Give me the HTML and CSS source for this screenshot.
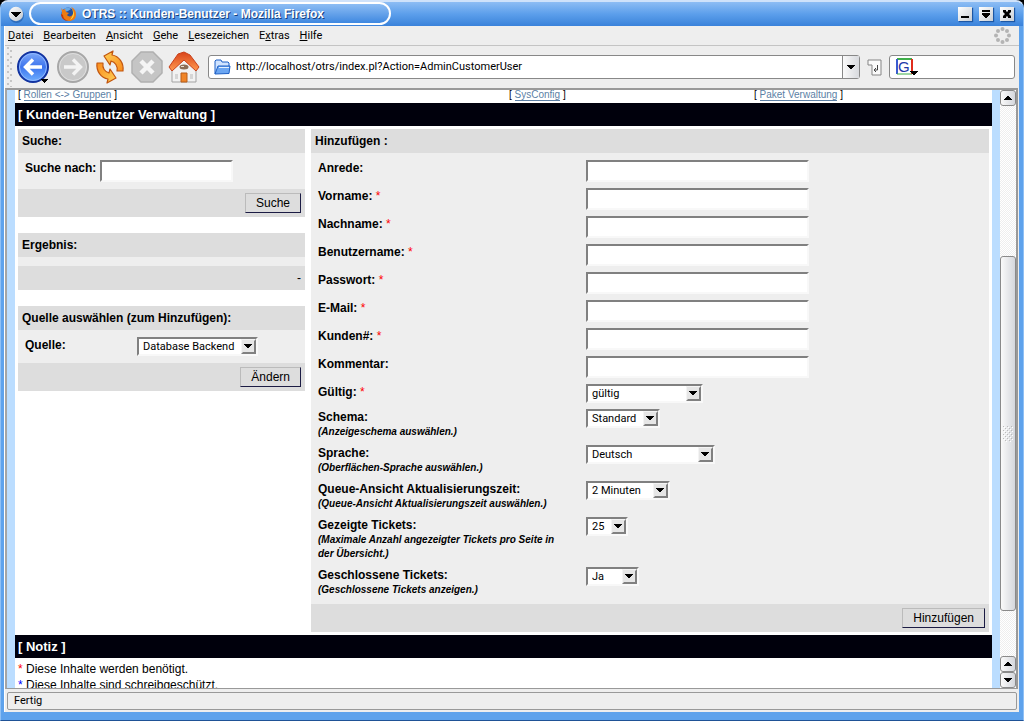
FILE: index.html
```html
<!DOCTYPE html>
<html lang="de">
<head>
<meta charset="utf-8">
<title>OTRS :: Kunden-Benutzer</title>
<link rel="stylesheet" href="styles.css">
</head>
<body>
<div class="window">
  <header class="titlebar">
    <button class="wm-menu" aria-label="Fenstermenü"><svg width="22" height="22" viewBox="0 0 22 22"><defs><linearGradient id="knob" x1="0" y1="0" x2="1" y2="1"><stop offset="0" stop-color="#fff"/><stop offset="1" stop-color="#bfc5cc"/></linearGradient></defs><circle cx="11.500" cy="12.500" r="7.500" fill="#1d57a4" opacity=".6"/><circle cx="11" cy="11" r="7.200" fill="url(#knob)"/><path d="M6 9h10v1h-1v1h-1v1h-1v1h-1v1h-2v-1H9v-1H8v-1H7v-1H6z"/></svg></button>
    <div class="title-tab">
      <svg width="16" height="16" viewBox="0 0 16 16"><circle cx="8" cy="8" r="6.500" fill="#254f9c"/><path d="M4 3c2-2 5-2 7 0L8 5 5 6z" fill="#65a8e8"/><path d="M1 2l2 2 2-1 1 3 3 1-2 2c1 2 5 2 6-1 1-2 0-5-2-7 3 1 5 4 5 7 0 5-3 7-7 7-5 0-7-4-7-7 0-2 0-4-1-6z" fill="#ee7b12"/><path d="M12 3c3 3 3 9-2 11 3-4 4-7 2-11z" fill="#ffd43b"/><path d="M1 8c0 4 3 7 7 7-3-1-5-3-5-6z" fill="#c63a0b"/></svg>
      <h1>OTRS :: Kunden-Benutzer - Mozilla Firefox</h1>
    </div>
    <div class="wm-buttons">
      <button aria-label="Minimieren"><svg width="14" height="14"><path d="M3 9h8v2H3z"/></svg></button>
      <button aria-label="Maximieren"><svg width="14" height="14"><path d="M3 3h8v2H3zM3 6h8v2h-1v1H9v1H8v1H6v-1H5V9H4V8H3z"/></svg></button>
      <button aria-label="Schließen"><svg width="14" height="14"><path d="M3 3h3v1l1 1 1-1V3h3v2L9 7l2 2v2H8v-1L7 9l-1 1v1H3V9l2-2-2-2z"/></svg></button>
    </div>
  </header>
  <div class="chrome">
    <nav class="menubar">
      <button><u>D</u>atei</button><button><u>B</u>earbeiten</button><button><u>A</u>nsicht</button><button><u>G</u>ehe</button><button><u>L</u>esezeichen</button><button>E<u>x</u>tras</button><button><u>H</u>ilfe</button>
      <svg class="throbber" width="17" height="17" viewBox="0 0 17 17" fill="#b4b4b4"><circle cx="8.500" cy="2" r="2"/><circle cx="13" cy="4" r="2"/><circle cx="15" cy="8.500" r="2"/><circle cx="13" cy="13" r="2"/><circle cx="8.500" cy="15" r="2"/><circle cx="4" cy="13" r="2"/><circle cx="2" cy="8.500" r="2"/><circle cx="4" cy="4" r="2"/></svg>
    </nav>
    <div class="toolbar">
      <svg class="grip" width="6" height="40"><defs><pattern id="dots" width="6" height="6" patternUnits="userSpaceOnUse"><path d="M0 0h2v2H0zM3 3h2v2H3z" fill="#c6c6c6"/></pattern></defs><rect width="6" height="40" fill="url(#dots)"/></svg>
      <button class="tool back" aria-label="Zurück"><svg width="34" height="34" viewBox="0 0 34 34"><defs><linearGradient id="back" x1="0" y1="0" x2="0" y2="1"><stop offset="0" stop-color="#7fa9f8"/><stop offset=".5" stop-color="#3d74ee"/><stop offset="1" stop-color="#6fb1ff"/></linearGradient></defs><circle cx="17" cy="17" r="15" fill="url(#back)" stroke="#1233a0" stroke-width="2"/><circle cx="17" cy="17" r="13.500" fill="none" stroke="#8fb8ff"/><path d="M26 17H10M17 9.500L9.500 17l7.500 7.500" fill="none" stroke="#fff" stroke-width="3.400"/><path d="M25 29h7v1h-1v1h-1v1h-1v1h-1v-1h-1v-1h-1v-1h-1z"/></svg></button>
      <button class="tool" aria-label="Vor"><svg width="34" height="34" viewBox="0 0 34 34"><circle cx="17" cy="17" r="15" fill="#c9c9c9" stroke="#a7a7a7" stroke-width="2"/><circle cx="17" cy="17" r="13.500" fill="none" stroke="#dedede"/><path d="M8 17h16M17 9.500l7.500 7.500-7.500 7.500" fill="none" stroke="#f3f3f3" stroke-width="3.400"/></svg></button>
      <button class="tool" aria-label="Neu laden"><svg width="34" height="34" viewBox="0 0 34 34"><defs><linearGradient id="amber" x1="0" y1="0" x2="1" y2="1"><stop offset="0" stop-color="#ffd257"/><stop offset="1" stop-color="#f98a1c"/></linearGradient></defs><g fill="url(#amber)" stroke="#c2560f" stroke-width="1.200" stroke-linejoin="round"><path d="M11 6l9-5-1 4c7 1 12 8 11 16h-6c1-5-2-9-6-10l-1 4z"/><path d="M11 6l9-5-1 4c7 1 12 8 11 16h-6c1-5-2-9-6-10l-1 4z" transform="rotate(180 17 17)"/></g></svg></button>
      <button class="tool" aria-label="Stopp"><svg width="34" height="34" viewBox="0 0 34 34"><path d="M11 2h12l9 9v12l-9 9H11l-9-9V11z" fill="#c5c5c5" stroke="#b0b0b0" stroke-width="1.500"/><path d="M11 11l12 12M23 11L11 23" stroke="#f5f5f5" stroke-width="4.500"/></svg></button>
      <button class="tool" aria-label="Startseite"><svg width="34" height="34" viewBox="0 0 34 34"><defs><linearGradient id="roof" x1="0" y1="0" x2="0" y2="1"><stop offset="0" stop-color="#d9431a"/><stop offset="1" stop-color="#ff9a50"/></linearGradient></defs><path d="M5 17L17 6l12 11v15H5z" fill="#f2f2f2" stroke="#a3a3a3"/><path d="M17 2L11 4 2 17l3 4L17 10l12 11 3-4L23 5z" fill="url(#roof)" stroke="#c8401a"/><path d="M14 23h6v9h-6z" fill="#f08528" stroke="#b65d1a"/><path d="M8 24h3v5H8zM23 24h3v5h-3z" fill="#d5d5d5"/><ellipse cx="17" cy="17" rx="4.500" ry="2.500" fill="#8b6d56"/><path d="M14 16h3v1h-3z" fill="#e8dccf"/></svg></button>
      <div class="address">
        <svg width="17" height="16" viewBox="0 0 17 16"><path d="M1 15V2l1-1h5l1 2h6l1 1v4" fill="#cfe3ff" stroke="#1d5fc4"/><path d="M1 15L4 7h12l-1 7.500z" fill="#6ba6f2" stroke="#1d5fc4"/><path d="M5 8.500h10" stroke="#e5f1ff"/></svg>
        <input type="text" aria-label="Adresse" value="http://localhost/otrs/index.pl?Action=AdminCustomerUser">
        <button class="drop" aria-label="Verlauf"><svg width="8" height="5"><path d="M0 0h8v1H7v1H6v1H5v1H3V3H2V2H1V1H0z"/></svg></button>
      </div>
      <button class="go" aria-label="Los"><svg width="15" height="17" viewBox="0 0 15 17"><path d="M1 1h13v15H5V6H1z" fill="#fafafa" stroke="#858585"/><path d="M10.500 6v5H7M9 9l-2 2 2 2" fill="none" stroke="#444"/></svg></button>
      <div class="search">
        <svg width="22" height="18" viewBox="0 0 22 18"><path d="M1 1h15" stroke="#3fae49" stroke-width="2"/><path d="M1 1v15" stroke="#3a5bd0" stroke-width="2"/><path d="M1 16h15" stroke="#3fae49"/><path d="M16 1v15" stroke="#e02c1c" stroke-width="2"/><text class="engine" x="2" y="14">G</text><path d="M14 13h8v1h-1v1h-1v1h-1v1h-2v-1h-1v-1h-1v-1h-1z"/></svg>
        <input type="text" aria-label="Websuche">
      </div>
    </div>
    <div class="view">
      <main class="page">
        <nav class="links">
          <span>[ <a href="#">Rollen &lt;-&gt; Gruppen</a> ]</span>
          <span>[ <a href="#">SysConfig</a> ]</span>
          <span>[ <a href="#">Paket Verwaltung</a> ]</span>
        </nav>
        <h2 class="band">[ Kunden-Benutzer Verwaltung ]</h2>
        <div class="columns">
          <div class="side">
            <form class="panel">
              <h3>Suche:</h3>
              <div class="body search-body"><label for="q">Suche nach:</label><input class="field" id="q" type="text"></div>
              <div class="foot"><button type="button" class="btn">Suche</button></div>
            </form>
            <section class="panel">
              <h3>Ergebnis:</h3>
              <div class="body empty"></div>
              <div class="foot result">-</div>
            </section>
            <form class="panel">
              <h3>Quelle auswählen (zum Hinzufügen):</h3>
              <div class="body source-body"><label for="src">Quelle:</label><select id="src" class="w-source"><option>Database Backend</option></select></div>
              <div class="foot"><button type="button" class="btn">Ändern</button></div>
            </form>
          </div>
          <form class="panel">
            <h3>Hinzufügen :</h3>
            <div class="body rows">
              <div class="row"><label for="f1">Anrede:</label><input class="field" id="f1" type="text"></div>
              <div class="row"><label for="f2">Vorname: <i class="req">*</i></label><input class="field" id="f2" type="text"></div>
              <div class="row"><label for="f3">Nachname: <i class="req">*</i></label><input class="field" id="f3" type="text"></div>
              <div class="row"><label for="f4">Benutzername: <i class="req">*</i></label><input class="field" id="f4" type="text"></div>
              <div class="row"><label for="f5">Passwort: <i class="req">*</i></label><input class="field" id="f5" type="password"></div>
              <div class="row"><label for="f6">E-Mail: <i class="req">*</i></label><input class="field" id="f6" type="text"></div>
              <div class="row"><label for="f7">Kunden#: <i class="req">*</i></label><input class="field" id="f7" type="text"></div>
              <div class="row"><label for="f8">Kommentar:</label><input class="field" id="f8" type="text"></div>
              <div class="row"><label for="f9">Gültig: <i class="req">*</i></label><select id="f9" class="w-valid"><option>gültig</option></select></div>
              <div class="row"><label for="f10">Schema:<em>(Anzeigeschema auswählen.)</em></label><select id="f10" class="w-theme"><option>Standard</option></select></div>
              <div class="row"><label for="f11">Sprache:<em>(Oberflächen-Sprache auswählen.)</em></label><select id="f11" class="w-lang"><option>Deutsch</option></select></div>
              <div class="row"><label for="f12">Queue-Ansicht Aktualisierungszeit:<em>(Queue-Ansicht Aktualisierungszeit auswählen.)</em></label><select id="f12" class="w-time"><option>2 Minuten</option></select></div>
              <div class="row"><label for="f13">Gezeigte Tickets:<em>(Maximale Anzahl angezeigter Tickets pro Seite in der Übersicht.)</em></label><select id="f13" class="w-count"><option>25</option></select></div>
              <div class="row"><label for="f14">Geschlossene Tickets:<em>(Geschlossene Tickets anzeigen.)</em></label><select id="f14" class="w-yes"><option>Ja</option></select></div>
            </div>
            <div class="foot"><button type="button" class="btn">Hinzufügen</button></div>
          </form>
        </div>
        <h2 class="band">[ Notiz ]</h2>
        <div class="notes">
          <p><span class="req">*</span> Diese Inhalte werden benötigt.</p>
          <p><span class="locked">*</span> Diese Inhalte sind schreibgeschützt.</p>
        </div>
      </main>
      <div class="scrollbar">
        <button aria-label="Nach oben"><svg width="8" height="4"><path d="M3 0h2v1h1v1h1v1h1v1H0V3h1V2h1V1h1z"/></svg></button>
        <div class="track before"></div>
        <div class="thumb"><svg width="10" height="16"><rect width="10" height="16" fill="url(#thumbdots)"/><defs><pattern id="thumbdots" width="4" height="4" patternUnits="userSpaceOnUse"><path d="M0 0h1v1H0zM2 2h1v1H2z" fill="#bbb"/><path d="M1 1h1v1H1zM3 3h1v1H3z" fill="#fff"/></pattern></defs></svg></div>
        <div class="track after"></div>
        <button aria-label="Nach oben"><svg width="8" height="4"><path d="M3 0h2v1h1v1h1v1h1v1H0V3h1V2h1V1h1z"/></svg></button>
        <button aria-label="Nach unten"><svg width="8" height="4"><path d="M0 0h8v1H7v1H6v1H5v1H3V3H2V2H1V1H0z"/></svg></button>
      </div>
    </div>
    <footer class="status">Fertig</footer>
  </div>
</div>
</body>
</html>
```
FILE: styles.css
```css
* { box-sizing: border-box; }
body, h1, h2, h3, p { margin: 0; }
body { background: #000; color: #000; }
button { border: 0; padding: 0; margin: 0; background: none; color: inherit; font: inherit; }
input { min-width: 0; margin: 0; font: inherit; }
svg { display: block; flex: none; }

.window {
  display: flex;
  flex-direction: column;
  height: 100vh;
  overflow: hidden;
  padding: 0 4px 8px 3px;
  background: #5ea2ec;
  border-top: 2px solid #cfe2fa;
  border-left: 1px solid #8fc0f5;
  border-right: 1px solid #8fc0f5;
  border-bottom: 1px solid #1f5296;
  border-radius: 8px 8px 0 0;
  font: 11px/16px Roboto, "DejaVu Sans Condensed", sans-serif;
}

.titlebar {
  display: flex;
  flex: none;
  align-items: center;
  height: 24px;
  margin: 0 -4px 0 -3px;
  padding: 0 9px 0 4px;
  background: linear-gradient(#8dbdf4, #5c9feb 50%, #3a82da);
}
.title-tab {
  display: flex;
  align-items: center;
  align-self: flex-start;
  gap: 6px;
  width: 362px;
  height: 23px;
  margin-left: 2px;
  padding-left: 29px;
  border: 2px solid #fff;
  border-radius: 12px;
  background: linear-gradient(#8dbdf4, #3f88e0);
}
.title-tab h1 {
  color: #fff;
  font: bold 12px/16px "Liberation Sans", Arial, sans-serif;
  text-shadow: 1px 1px 0 #17407c;
  white-space: nowrap;
}
.wm-buttons { display: flex; gap: 7px; margin-left: auto; }
.wm-buttons button {
  width: 14px;
  height: 14px;
  background: linear-gradient(135deg, #fff, #c9ced4);
  box-shadow: 1px 1px 1px #1d57a4;
}

.chrome {
  display: flex;
  flex: 1;
  flex-direction: column;
  min-height: 0;
  background: #eee;
  border-left: 1px solid #fff;
}
.menubar {
  display: flex;
  flex: none;
  align-items: center;
  gap: 10px;
  height: 20px;
  padding: 0 8px 0 3px;
  border-bottom: 1px solid #c4c4c4;
}
.throbber { margin-left: auto; }

.toolbar {
  display: flex;
  flex: none;
  align-items: center;
  gap: 3px;
  height: 42px;
  padding: 0 4px 0 2px;
}
.tool { width: 34px; height: 34px; }
.back { margin-right: 3px; }
.address, .search {
  display: flex;
  align-items: center;
  height: 24px;
  border: 1px solid #888;
  border-radius: 3px;
  background: #fff;
}
.address { flex: 1; gap: 5px; margin-left: 4px; padding-left: 5px; }
.search { width: 126px; padding-left: 6px; }
.address input, .search input { flex: 1; width: 0; padding: 0; border: 0; outline: 0; background: none; }
.drop {
  display: grid;
  place-content: center;
  align-self: stretch;
  width: 17px;
  border-left: 1px solid #888;
  background: linear-gradient(90deg, #fafafa, #d8dade);
}
.engine { font: 15px "Liberation Sans", Arial, sans-serif; fill: #1d38a8; }
.go { margin: 0 4px; }

.view {
  display: flex;
  flex: 1;
  min-height: 0;
  overflow: hidden;
  margin: 0 1px 0 0;
  border: 2px solid #999;
  border-left-color: #a5a5a5;
  border-bottom-width: 1px;
  background: #fff;
}
.page {
  flex: 1;
  min-width: 0;
  border: solid #bbddff;
  border-width: 0 8px;
  background: #fff;
  font: 12px/16px "Liberation Sans", Arial, sans-serif;
}
.links {
  display: grid;
  grid-template-columns: 491fr 245fr 238fr;
  padding: 0 0 3px 3px;
  font-size: 10px;
  line-height: 10px;
}
.links a { color: #5c7fa5; text-decoration: none; border-bottom: 1px solid #5c7fa5; }
.band {
  padding: 0 3px;
  background: #00000c;
  color: #fff;
  font-size: 13px;
  line-height: 23px;
}
.columns {
  display: grid;
  grid-template-columns: 287fr 678fr;
  gap: 6px;
  align-items: start;
  padding: 3px;
}
.side { display: grid; gap: 16px; }
.panel { background: #eee; }
.panel h3 { padding: 0 4px; background: #ddd; font-size: 12px; line-height: 24px; }
.body label { font-weight: bold; }
.foot { display: flex; justify-content: flex-end; padding: 4px; background: #ddd; }
.btn {
  height: 20px;
  padding: 0 10px;
  border: 1px solid #bbb;
  border-right-color: #1c1c44;
  border-bottom-color: #1c1c44;
  line-height: 18px;
}
.field {
  height: 22px;
  border: 2px solid;
  border-color: #808080 #f8f8f8 #f8f8f8 #808080;
  background: #fff;
}
.search-body { display: flex; align-items: start; gap: 4px; padding: 7px; }
.search-body .field { width: 133px; }
.empty { height: 9px; }
.source-body { display: grid; grid-template-columns: 112px 1fr; align-items: start; padding: 7px; }
.rows { padding: 4px 7px; }
.row {
  display: grid;
  grid-template-columns: 244px 223px;
  column-gap: 24px;
  align-items: start;
  padding: 3px 0;
}
.row label em { display: block; font-size: 10px; line-height: 14px; }
.req { color: #f00; font-weight: normal; font-style: normal; }
.locked { color: #00f; }

select {
  appearance: none;
  height: 19px;
  margin: 0;
  padding: 0 18px 0 4px;
  border: 2px solid;
  border-color: #808080 #f8f8f8 #f8f8f8 #808080;
  border-radius: 0;
  background: #fff url("data:image/svg+xml,%3Csvg xmlns='http://www.w3.org/2000/svg' width='15' height='15'%3E%3Cpath fill='%23808080' d='M0 0h15v15H0z'/%3E%3Cpath fill='%23f4f4f4' d='M0 0h15l-2 2v11H2l-2 2z'/%3E%3Cpath fill='%23e6e6e6' d='M1 1h12v12H1z'/%3E%3Cpath d='M3 5h8v1h-1v1H9v1H8v1H6V8H5V7H4V6H3z'/%3E%3C/svg%3E") right center no-repeat;
  color: #000;
  font: 11px/15px Roboto, "DejaVu Sans Condensed", sans-serif;
}
.w-source { width: 121px; }
.w-valid { width: 117px; }
.w-theme { width: 74px; }
.w-lang { width: 129px; }
.w-time { width: 84px; }
.w-count { width: 42px; }
.w-yes { width: 53px; }

.notes { padding: 3px; }

.scrollbar { display: flex; flex: none; flex-direction: column; width: 16px; }
.scrollbar button, .thumb {
  display: grid;
  place-content: center;
  flex: none;
  height: 16px;
  border: 1px solid #8a8a8a;
  border-radius: 3px;
  background: linear-gradient(90deg, #fafafa, #d5d7dc);
}
.scrollbar .thumb { flex: 354; }
.track { background: repeating-conic-gradient(#eee 0 25%, #fff 0 50%) 0 0 / 2px 2px; }
.track.before { flex: 151; }
.track.after { flex: 45; }

.status {
  flex: none;
  height: 18px;
  margin: 3px 2px 2px;
  padding: 0 6px;
  border: 1px solid #999;
  border-radius: 2px;
}
```
